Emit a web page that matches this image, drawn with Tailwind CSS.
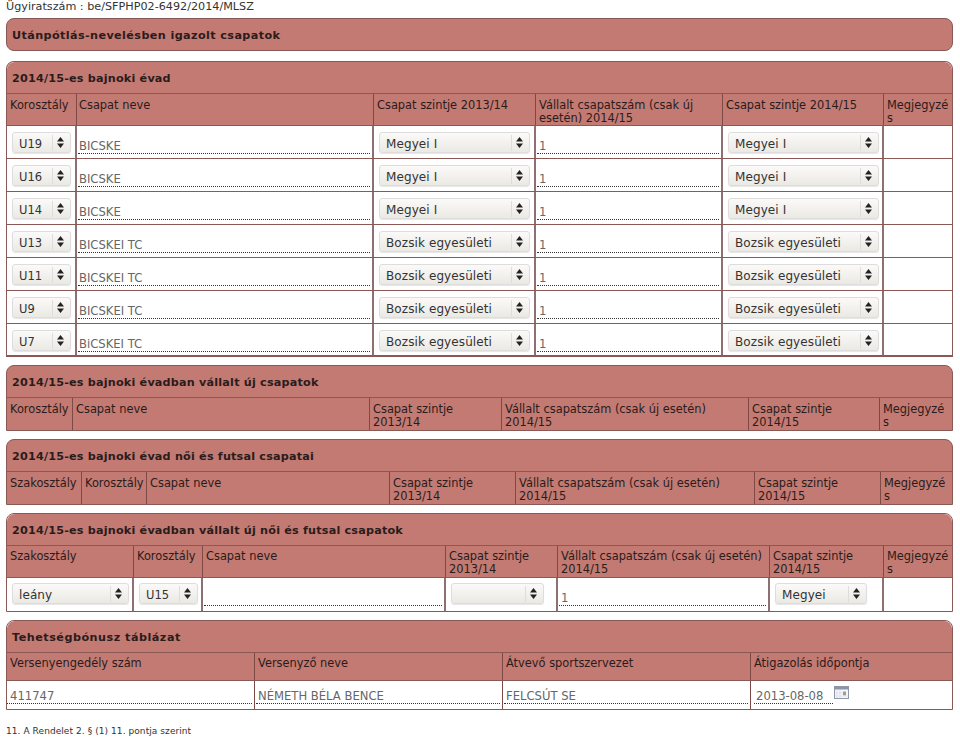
<!DOCTYPE html>
<html lang="hu">
<head>
<meta charset="utf-8">
<script src="https://cdn.jsdelivr.net/npm/@tailwindcss/browser@4"></script>
</head>
<body class="bg-white font-['DejaVu_Sans',sans-serif] text-[11.4px] leading-[13px] text-[#2b1c1c] w-[960px] h-[738px] overflow-hidden">
<div class="pl-[6px] pr-[7px] flex flex-col">
<div class="h-[13px] mb-[5px] text-[11.2px] text-[#333] whitespace-nowrap">Ügyiratszám : be/SFPHP02-6492/2014/MLSZ</div>

<section class="h-[33px] rounded-[8px] border border-[#8a5855] bg-[#c27a72] pl-[5px] pt-[10px] text-[11.2px] font-bold tracking-[0.4px] mb-[10px]">Utánpótlás-nevelésben igazolt csapatok</section>

<section class="rounded-t-[8px] border border-b-2 border-[#8a5855] bg-white mb-[8px]">
  <div class="h-[31px] rounded-t-[8px] bg-[#c27a72] pl-[5px] pt-[10px] text-[11.2px] font-bold tracking-[0.2px]">2014/15-es bajnoki évad</div>
  <div class="grid grid-cols-[70px_297px_162px_187px_161px_1fr] bg-[#c27a72] h-[33px] border-y border-[#8a5855] divide-x divide-[#7d4a48]">
    <div class="pl-[3px] pt-[5px]">Korosztály</div><div class="pl-[2px] pt-[5px]">Csapat neve</div><div class="pl-[3px] pt-[5px] whitespace-nowrap">Csapat szintje 2013/14</div><div class="pl-[3px] pt-[5px]">Vállalt csapatszám (csak új esetén) 2014/15</div><div class="pl-[3px] pt-[5px] whitespace-nowrap">Csapat szintje 2014/15</div><div class="pl-[3px] pt-[5px]">Megjegyzé<br>s</div>
  </div>
  <div class="grid grid-cols-[70px_297px_162px_187px_161px_1fr] h-[33px] border-b border-[#8a5855] divide-x-2 divide-[#8f7072]">
    <div class="pl-[5px] pt-[6px]"><div class="flex w-[59px] h-[21px] rounded-[3px] border border-[#ddd] shadow-[0_1px_1px_rgba(0,0,0,0.1)] bg-gradient-to-b from-[#fbfaf8] to-[#ebe9e4] items-center"><span class="flex-1 pl-[6px] pt-[4px] text-[11.5px] text-[#333]">U19</span><span class="w-[18px] h-[16px] pr-[2px] border-l border-[#ddd] flex justify-center items-center"><svg width="7" height="11" viewBox="0 0 7 11"><path d="M3.5 0 7 4.5H0ZM3.5 11 0 6.5H7Z" fill="#222"/></svg></span></div></div>
    <div class="pl-[1px] pr-[2px] pt-[13px]"><div class="h-[15px] pt-px border-b border-dotted border-[#333] text-[11.6px] text-[#666] pl-[1px]">BICSKE</div></div>
    <div class="pl-[5px] pt-[6px]"><div class="flex w-[151px] h-[21px] rounded-[3px] border border-[#ddd] shadow-[0_1px_1px_rgba(0,0,0,0.1)] bg-gradient-to-b from-[#fbfaf8] to-[#ebe9e4] items-center"><span class="flex-1 pl-[6px] pt-[4px] text-[12px] tracking-[0.1px] text-[#333]">Megyei I</span><span class="w-[18px] h-[16px] pr-[2px] border-l border-[#ddd] flex justify-center items-center"><svg width="7" height="11" viewBox="0 0 7 11"><path d="M3.5 0 7 4.5H0ZM3.5 11 0 6.5H7Z" fill="#222"/></svg></span></div></div>
    <div class="pl-px pr-[2px] pt-[13px]"><div class="h-[15px] pt-px border-b border-dotted border-[#333] text-[11.6px] text-[#666] pl-[2px]">1</div></div>
    <div class="pl-[5px] pt-[6px]"><div class="flex w-[151px] h-[21px] rounded-[3px] border border-[#ddd] shadow-[0_1px_1px_rgba(0,0,0,0.1)] bg-gradient-to-b from-[#fbfaf8] to-[#ebe9e4] items-center"><span class="flex-1 pl-[6px] pt-[4px] text-[12px] tracking-[0.1px] text-[#333]">Megyei I</span><span class="w-[18px] h-[16px] pr-[2px] border-l border-[#ddd] flex justify-center items-center"><svg width="7" height="11" viewBox="0 0 7 11"><path d="M3.5 0 7 4.5H0ZM3.5 11 0 6.5H7Z" fill="#222"/></svg></span></div></div>
    <div></div>
  </div>
  <div class="grid grid-cols-[70px_297px_162px_187px_161px_1fr] h-[33px] border-b border-[#8a5855] divide-x-2 divide-[#8f7072]">
    <div class="pl-[5px] pt-[6px]"><div class="flex w-[59px] h-[21px] rounded-[3px] border border-[#ddd] shadow-[0_1px_1px_rgba(0,0,0,0.1)] bg-gradient-to-b from-[#fbfaf8] to-[#ebe9e4] items-center"><span class="flex-1 pl-[6px] pt-[4px] text-[11.5px] text-[#333]">U16</span><span class="w-[18px] h-[16px] pr-[2px] border-l border-[#ddd] flex justify-center items-center"><svg width="7" height="11" viewBox="0 0 7 11"><path d="M3.5 0 7 4.5H0ZM3.5 11 0 6.5H7Z" fill="#222"/></svg></span></div></div>
    <div class="pl-[1px] pr-[2px] pt-[13px]"><div class="h-[15px] pt-px border-b border-dotted border-[#333] text-[11.6px] text-[#666] pl-[1px]">BICSKE</div></div>
    <div class="pl-[5px] pt-[6px]"><div class="flex w-[151px] h-[21px] rounded-[3px] border border-[#ddd] shadow-[0_1px_1px_rgba(0,0,0,0.1)] bg-gradient-to-b from-[#fbfaf8] to-[#ebe9e4] items-center"><span class="flex-1 pl-[6px] pt-[4px] text-[12px] tracking-[0.1px] text-[#333]">Megyei I</span><span class="w-[18px] h-[16px] pr-[2px] border-l border-[#ddd] flex justify-center items-center"><svg width="7" height="11" viewBox="0 0 7 11"><path d="M3.5 0 7 4.5H0ZM3.5 11 0 6.5H7Z" fill="#222"/></svg></span></div></div>
    <div class="pl-px pr-[2px] pt-[13px]"><div class="h-[15px] pt-px border-b border-dotted border-[#333] text-[11.6px] text-[#666] pl-[2px]">1</div></div>
    <div class="pl-[5px] pt-[6px]"><div class="flex w-[151px] h-[21px] rounded-[3px] border border-[#ddd] shadow-[0_1px_1px_rgba(0,0,0,0.1)] bg-gradient-to-b from-[#fbfaf8] to-[#ebe9e4] items-center"><span class="flex-1 pl-[6px] pt-[4px] text-[12px] tracking-[0.1px] text-[#333]">Megyei I</span><span class="w-[18px] h-[16px] pr-[2px] border-l border-[#ddd] flex justify-center items-center"><svg width="7" height="11" viewBox="0 0 7 11"><path d="M3.5 0 7 4.5H0ZM3.5 11 0 6.5H7Z" fill="#222"/></svg></span></div></div>
    <div></div>
  </div>
  <div class="grid grid-cols-[70px_297px_162px_187px_161px_1fr] h-[33px] border-b border-[#8a5855] divide-x-2 divide-[#8f7072]">
    <div class="pl-[5px] pt-[6px]"><div class="flex w-[59px] h-[21px] rounded-[3px] border border-[#ddd] shadow-[0_1px_1px_rgba(0,0,0,0.1)] bg-gradient-to-b from-[#fbfaf8] to-[#ebe9e4] items-center"><span class="flex-1 pl-[6px] pt-[4px] text-[11.5px] text-[#333]">U14</span><span class="w-[18px] h-[16px] pr-[2px] border-l border-[#ddd] flex justify-center items-center"><svg width="7" height="11" viewBox="0 0 7 11"><path d="M3.5 0 7 4.5H0ZM3.5 11 0 6.5H7Z" fill="#222"/></svg></span></div></div>
    <div class="pl-[1px] pr-[2px] pt-[13px]"><div class="h-[15px] pt-px border-b border-dotted border-[#333] text-[11.6px] text-[#666] pl-[1px]">BICSKE</div></div>
    <div class="pl-[5px] pt-[6px]"><div class="flex w-[151px] h-[21px] rounded-[3px] border border-[#ddd] shadow-[0_1px_1px_rgba(0,0,0,0.1)] bg-gradient-to-b from-[#fbfaf8] to-[#ebe9e4] items-center"><span class="flex-1 pl-[6px] pt-[4px] text-[12px] tracking-[0.1px] text-[#333]">Megyei I</span><span class="w-[18px] h-[16px] pr-[2px] border-l border-[#ddd] flex justify-center items-center"><svg width="7" height="11" viewBox="0 0 7 11"><path d="M3.5 0 7 4.5H0ZM3.5 11 0 6.5H7Z" fill="#222"/></svg></span></div></div>
    <div class="pl-px pr-[2px] pt-[13px]"><div class="h-[15px] pt-px border-b border-dotted border-[#333] text-[11.6px] text-[#666] pl-[2px]">1</div></div>
    <div class="pl-[5px] pt-[6px]"><div class="flex w-[151px] h-[21px] rounded-[3px] border border-[#ddd] shadow-[0_1px_1px_rgba(0,0,0,0.1)] bg-gradient-to-b from-[#fbfaf8] to-[#ebe9e4] items-center"><span class="flex-1 pl-[6px] pt-[4px] text-[12px] tracking-[0.1px] text-[#333]">Megyei I</span><span class="w-[18px] h-[16px] pr-[2px] border-l border-[#ddd] flex justify-center items-center"><svg width="7" height="11" viewBox="0 0 7 11"><path d="M3.5 0 7 4.5H0ZM3.5 11 0 6.5H7Z" fill="#222"/></svg></span></div></div>
    <div></div>
  </div>
  <div class="grid grid-cols-[70px_297px_162px_187px_161px_1fr] h-[33px] border-b border-[#8a5855] divide-x-2 divide-[#8f7072]">
    <div class="pl-[5px] pt-[6px]"><div class="flex w-[59px] h-[21px] rounded-[3px] border border-[#ddd] shadow-[0_1px_1px_rgba(0,0,0,0.1)] bg-gradient-to-b from-[#fbfaf8] to-[#ebe9e4] items-center"><span class="flex-1 pl-[6px] pt-[4px] text-[11.5px] text-[#333]">U13</span><span class="w-[18px] h-[16px] pr-[2px] border-l border-[#ddd] flex justify-center items-center"><svg width="7" height="11" viewBox="0 0 7 11"><path d="M3.5 0 7 4.5H0ZM3.5 11 0 6.5H7Z" fill="#222"/></svg></span></div></div>
    <div class="pl-[1px] pr-[2px] pt-[13px]"><div class="h-[15px] pt-px border-b border-dotted border-[#333] text-[11.6px] text-[#666] pl-[1px]">BICSKEI TC</div></div>
    <div class="pl-[5px] pt-[6px]"><div class="flex w-[151px] h-[21px] rounded-[3px] border border-[#ddd] shadow-[0_1px_1px_rgba(0,0,0,0.1)] bg-gradient-to-b from-[#fbfaf8] to-[#ebe9e4] items-center"><span class="flex-1 pl-[6px] pt-[4px] text-[12px] tracking-[0.1px] text-[#333]">Bozsik egyesületi</span><span class="w-[18px] h-[16px] pr-[2px] border-l border-[#ddd] flex justify-center items-center"><svg width="7" height="11" viewBox="0 0 7 11"><path d="M3.5 0 7 4.5H0ZM3.5 11 0 6.5H7Z" fill="#222"/></svg></span></div></div>
    <div class="pl-px pr-[2px] pt-[13px]"><div class="h-[15px] pt-px border-b border-dotted border-[#333] text-[11.6px] text-[#666] pl-[2px]">1</div></div>
    <div class="pl-[5px] pt-[6px]"><div class="flex w-[151px] h-[21px] rounded-[3px] border border-[#ddd] shadow-[0_1px_1px_rgba(0,0,0,0.1)] bg-gradient-to-b from-[#fbfaf8] to-[#ebe9e4] items-center"><span class="flex-1 pl-[6px] pt-[4px] text-[12px] tracking-[0.1px] text-[#333]">Bozsik egyesületi</span><span class="w-[18px] h-[16px] pr-[2px] border-l border-[#ddd] flex justify-center items-center"><svg width="7" height="11" viewBox="0 0 7 11"><path d="M3.5 0 7 4.5H0ZM3.5 11 0 6.5H7Z" fill="#222"/></svg></span></div></div>
    <div></div>
  </div>
  <div class="grid grid-cols-[70px_297px_162px_187px_161px_1fr] h-[33px] border-b border-[#8a5855] divide-x-2 divide-[#8f7072]">
    <div class="pl-[5px] pt-[6px]"><div class="flex w-[59px] h-[21px] rounded-[3px] border border-[#ddd] shadow-[0_1px_1px_rgba(0,0,0,0.1)] bg-gradient-to-b from-[#fbfaf8] to-[#ebe9e4] items-center"><span class="flex-1 pl-[6px] pt-[4px] text-[11.5px] text-[#333]">U11</span><span class="w-[18px] h-[16px] pr-[2px] border-l border-[#ddd] flex justify-center items-center"><svg width="7" height="11" viewBox="0 0 7 11"><path d="M3.5 0 7 4.5H0ZM3.5 11 0 6.5H7Z" fill="#222"/></svg></span></div></div>
    <div class="pl-[1px] pr-[2px] pt-[13px]"><div class="h-[15px] pt-px border-b border-dotted border-[#333] text-[11.6px] text-[#666] pl-[1px]">BICSKEI TC</div></div>
    <div class="pl-[5px] pt-[6px]"><div class="flex w-[151px] h-[21px] rounded-[3px] border border-[#ddd] shadow-[0_1px_1px_rgba(0,0,0,0.1)] bg-gradient-to-b from-[#fbfaf8] to-[#ebe9e4] items-center"><span class="flex-1 pl-[6px] pt-[4px] text-[12px] tracking-[0.1px] text-[#333]">Bozsik egyesületi</span><span class="w-[18px] h-[16px] pr-[2px] border-l border-[#ddd] flex justify-center items-center"><svg width="7" height="11" viewBox="0 0 7 11"><path d="M3.5 0 7 4.5H0ZM3.5 11 0 6.5H7Z" fill="#222"/></svg></span></div></div>
    <div class="pl-px pr-[2px] pt-[13px]"><div class="h-[15px] pt-px border-b border-dotted border-[#333] text-[11.6px] text-[#666] pl-[2px]">1</div></div>
    <div class="pl-[5px] pt-[6px]"><div class="flex w-[151px] h-[21px] rounded-[3px] border border-[#ddd] shadow-[0_1px_1px_rgba(0,0,0,0.1)] bg-gradient-to-b from-[#fbfaf8] to-[#ebe9e4] items-center"><span class="flex-1 pl-[6px] pt-[4px] text-[12px] tracking-[0.1px] text-[#333]">Bozsik egyesületi</span><span class="w-[18px] h-[16px] pr-[2px] border-l border-[#ddd] flex justify-center items-center"><svg width="7" height="11" viewBox="0 0 7 11"><path d="M3.5 0 7 4.5H0ZM3.5 11 0 6.5H7Z" fill="#222"/></svg></span></div></div>
    <div></div>
  </div>
  <div class="grid grid-cols-[70px_297px_162px_187px_161px_1fr] h-[33px] border-b border-[#8a5855] divide-x-2 divide-[#8f7072]">
    <div class="pl-[5px] pt-[6px]"><div class="flex w-[59px] h-[21px] rounded-[3px] border border-[#ddd] shadow-[0_1px_1px_rgba(0,0,0,0.1)] bg-gradient-to-b from-[#fbfaf8] to-[#ebe9e4] items-center"><span class="flex-1 pl-[6px] pt-[4px] text-[11.5px] text-[#333]">U9</span><span class="w-[18px] h-[16px] pr-[2px] border-l border-[#ddd] flex justify-center items-center"><svg width="7" height="11" viewBox="0 0 7 11"><path d="M3.5 0 7 4.5H0ZM3.5 11 0 6.5H7Z" fill="#222"/></svg></span></div></div>
    <div class="pl-[1px] pr-[2px] pt-[13px]"><div class="h-[15px] pt-px border-b border-dotted border-[#333] text-[11.6px] text-[#666] pl-[1px]">BICSKEI TC</div></div>
    <div class="pl-[5px] pt-[6px]"><div class="flex w-[151px] h-[21px] rounded-[3px] border border-[#ddd] shadow-[0_1px_1px_rgba(0,0,0,0.1)] bg-gradient-to-b from-[#fbfaf8] to-[#ebe9e4] items-center"><span class="flex-1 pl-[6px] pt-[4px] text-[12px] tracking-[0.1px] text-[#333]">Bozsik egyesületi</span><span class="w-[18px] h-[16px] pr-[2px] border-l border-[#ddd] flex justify-center items-center"><svg width="7" height="11" viewBox="0 0 7 11"><path d="M3.5 0 7 4.5H0ZM3.5 11 0 6.5H7Z" fill="#222"/></svg></span></div></div>
    <div class="pl-px pr-[2px] pt-[13px]"><div class="h-[15px] pt-px border-b border-dotted border-[#333] text-[11.6px] text-[#666] pl-[2px]">1</div></div>
    <div class="pl-[5px] pt-[6px]"><div class="flex w-[151px] h-[21px] rounded-[3px] border border-[#ddd] shadow-[0_1px_1px_rgba(0,0,0,0.1)] bg-gradient-to-b from-[#fbfaf8] to-[#ebe9e4] items-center"><span class="flex-1 pl-[6px] pt-[4px] text-[12px] tracking-[0.1px] text-[#333]">Bozsik egyesületi</span><span class="w-[18px] h-[16px] pr-[2px] border-l border-[#ddd] flex justify-center items-center"><svg width="7" height="11" viewBox="0 0 7 11"><path d="M3.5 0 7 4.5H0ZM3.5 11 0 6.5H7Z" fill="#222"/></svg></span></div></div>
    <div></div>
  </div>
  <div class="grid grid-cols-[70px_297px_162px_187px_161px_1fr] h-[31px] divide-x-2 divide-[#8f7072]">
    <div class="pl-[5px] pt-[6px]"><div class="flex w-[59px] h-[21px] rounded-[3px] border border-[#ddd] shadow-[0_1px_1px_rgba(0,0,0,0.1)] bg-gradient-to-b from-[#fbfaf8] to-[#ebe9e4] items-center"><span class="flex-1 pl-[6px] pt-[4px] text-[11.5px] text-[#333]">U7</span><span class="w-[18px] h-[16px] pr-[2px] border-l border-[#ddd] flex justify-center items-center"><svg width="7" height="11" viewBox="0 0 7 11"><path d="M3.5 0 7 4.5H0ZM3.5 11 0 6.5H7Z" fill="#222"/></svg></span></div></div>
    <div class="pl-[1px] pr-[2px] pt-[13px]"><div class="h-[15px] pt-px border-b border-dotted border-[#333] text-[11.6px] text-[#666] pl-[1px]">BiCSKEI TC</div></div>
    <div class="pl-[5px] pt-[6px]"><div class="flex w-[151px] h-[21px] rounded-[3px] border border-[#ddd] shadow-[0_1px_1px_rgba(0,0,0,0.1)] bg-gradient-to-b from-[#fbfaf8] to-[#ebe9e4] items-center"><span class="flex-1 pl-[6px] pt-[4px] text-[12px] tracking-[0.1px] text-[#333]">Bozsik egyesületi</span><span class="w-[18px] h-[16px] pr-[2px] border-l border-[#ddd] flex justify-center items-center"><svg width="7" height="11" viewBox="0 0 7 11"><path d="M3.5 0 7 4.5H0ZM3.5 11 0 6.5H7Z" fill="#222"/></svg></span></div></div>
    <div class="pl-px pr-[2px] pt-[13px]"><div class="h-[15px] pt-px border-b border-dotted border-[#333] text-[11.6px] text-[#666] pl-[2px]">1</div></div>
    <div class="pl-[5px] pt-[6px]"><div class="flex w-[151px] h-[21px] rounded-[3px] border border-[#ddd] shadow-[0_1px_1px_rgba(0,0,0,0.1)] bg-gradient-to-b from-[#fbfaf8] to-[#ebe9e4] items-center"><span class="flex-1 pl-[6px] pt-[4px] text-[12px] tracking-[0.1px] text-[#333]">Bozsik egyesületi</span><span class="w-[18px] h-[16px] pr-[2px] border-l border-[#ddd] flex justify-center items-center"><svg width="7" height="11" viewBox="0 0 7 11"><path d="M3.5 0 7 4.5H0ZM3.5 11 0 6.5H7Z" fill="#222"/></svg></span></div></div>
    <div></div>
  </div>
</section>

<section class="rounded-t-[8px] border border-[#8a5855] bg-[#c27a72] mb-[8px] h-[66px]">
  <div class="h-[31px] pl-[5px] pt-[10px] text-[11.2px] font-bold tracking-[0.2px]">2014/15-es bajnoki évadban vállalt új csapatok</div>
  <div class="grid grid-cols-[66px_297px_132px_247px_131px_1fr] h-[33px] border-t border-[#8a5855] divide-x divide-[#7d4a48]">
    <div class="pl-[3px] pt-[5px]">Korosztály</div><div class="pl-[3px] pt-[5px]">Csapat neve</div><div class="pl-[3px] pt-[5px]">Csapat szintje 2013/14</div><div class="pl-[3px] pt-[5px]">Vállalt csapatszám (csak új esetén) 2014/15</div><div class="pl-[3px] pt-[5px]">Csapat szintje 2014/15</div><div class="pl-[3px] pt-[5px]">Megjegyzé<br>s</div>
  </div>
</section>

<section class="rounded-t-[8px] border border-[#8a5855] bg-[#c27a72] mb-[8px] h-[66px]">
  <div class="h-[31px] pl-[5px] pt-[10px] text-[11.2px] font-bold tracking-[0.2px]">2014/15-es bajnoki évad női és futsal csapatai</div>
  <div class="grid grid-cols-[75px_65px_243px_126px_239px_126px_1fr] h-[33px] border-t border-[#8a5855] divide-x divide-[#7d4a48]">
    <div class="pl-[3px] pt-[5px]">Szakosztály</div><div class="pl-[3px] pt-[5px]">Korosztály</div><div class="pl-[3px] pt-[5px]">Csapat neve</div><div class="pl-[3px] pt-[5px]">Csapat szintje 2013/14</div><div class="pl-[3px] pt-[5px]">Vállalt csapatszám (csak új esetén) 2014/15</div><div class="pl-[3px] pt-[5px]">Csapat szintje 2014/15</div><div class="pl-[3px] pt-[5px]">Megjegyzé<br>s</div>
  </div>
</section>

<section class="rounded-t-[8px] border border-[#8a5855] bg-white mb-[8px] h-[99px]">
  <div class="h-[31px] rounded-t-[8px] bg-[#c27a72] pl-[5px] pt-[10px] text-[11.2px] font-bold tracking-[0.2px]">2014/15-es bajnoki évadban vállalt új női és futsal csapatok</div>
  <div class="grid grid-cols-[127px_69px_243px_112px_212px_114px_1fr] h-[33px] bg-[#c27a72] border-y border-[#8a5855] divide-x divide-[#7d4a48]">
    <div class="pl-[3px] pt-[4px]">Szakosztály</div><div class="pl-[3px] pt-[4px]">Korosztály</div><div class="pl-[3px] pt-[4px]">Csapat neve</div><div class="pl-[3px] pt-[4px]">Csapat szintje 2013/14</div><div class="pl-[3px] pt-[4px]">Vállalt csapatszám (csak új esetén) 2014/15</div><div class="pl-[3px] pt-[4px]">Csapat szintje 2014/15</div><div class="pl-[3px] pt-[4px]">Megjegyzé<br>s</div>
  </div>
  <div class="grid grid-cols-[127px_69px_243px_112px_212px_114px_1fr] h-[33px] divide-x-2 divide-[#8f7072]">
    <div class="pl-[5px] pt-[5px]"><div class="flex w-[117px] h-[21px] rounded-[3px] border border-[#ddd] shadow-[0_1px_1px_rgba(0,0,0,0.1)] bg-gradient-to-b from-[#fbfaf8] to-[#ebe9e4] items-center"><span class="flex-1 pl-[6px] pt-[4px] text-[12px] tracking-[0.1px] text-[#333]">leány</span><span class="w-[18px] h-[16px] pr-[2px] border-l border-[#ddd] flex justify-center items-center"><svg width="7" height="11" viewBox="0 0 7 11"><path d="M3.5 0 7 4.5H0ZM3.5 11 0 6.5H7Z" fill="#222"/></svg></span></div></div>
    <div class="pl-[5px] pt-[5px]"><div class="flex w-[59px] h-[21px] rounded-[3px] border border-[#ddd] shadow-[0_1px_1px_rgba(0,0,0,0.1)] bg-gradient-to-b from-[#fbfaf8] to-[#ebe9e4] items-center"><span class="flex-1 pl-[6px] pt-[4px] text-[11.5px] text-[#333]">U15</span><span class="w-[18px] h-[16px] pr-[2px] border-l border-[#ddd] flex justify-center items-center"><svg width="7" height="11" viewBox="0 0 7 11"><path d="M3.5 0 7 4.5H0ZM3.5 11 0 6.5H7Z" fill="#222"/></svg></span></div></div>
    <div class="pl-px pr-[2px] pt-[13px]"><div class="h-[15px] border-b border-dotted border-[#333]"></div></div>
    <div class="pl-[5px] pt-[5px]"><div class="flex w-[93px] h-[21px] rounded-[3px] border border-[#ddd] shadow-[0_1px_1px_rgba(0,0,0,0.1)] bg-gradient-to-b from-[#fbfaf8] to-[#ebe9e4] items-center"><span class="flex-1"></span><span class="w-[18px] h-[16px] pr-[2px] border-l border-[#ddd] flex justify-center items-center"><svg width="7" height="11" viewBox="0 0 7 11"><path d="M3.5 0 7 4.5H0ZM3.5 11 0 6.5H7Z" fill="#222"/></svg></span></div></div>
    <div class="pl-px pr-[2px] pt-[13px]"><div class="h-[15px] pt-px border-b border-dotted border-[#333] text-[11.6px] text-[#666] pl-[2px]">1</div></div>
    <div class="pl-[5px] pt-[5px]"><div class="flex w-[92px] h-[21px] rounded-[3px] border border-[#ddd] shadow-[0_1px_1px_rgba(0,0,0,0.1)] bg-gradient-to-b from-[#fbfaf8] to-[#ebe9e4] items-center"><span class="flex-1 pl-[6px] pt-[4px] text-[12px] tracking-[0.1px] text-[#333]">Megyei</span><span class="w-[18px] h-[16px] pr-[2px] border-l border-[#ddd] flex justify-center items-center"><svg width="7" height="11" viewBox="0 0 7 11"><path d="M3.5 0 7 4.5H0ZM3.5 11 0 6.5H7Z" fill="#222"/></svg></span></div></div>
    <div></div>
  </div>
</section>

<section class="rounded-t-[8px] border border-[#8a5855] bg-white h-[90px]">
  <div class="h-[31px] rounded-t-[8px] bg-[#c27a72] pl-[5px] pt-[10px] text-[11.2px] font-bold tracking-[0.5px]">Tehetségbónusz táblázat</div>
  <div class="grid grid-cols-[248px_248px_248px_1fr] h-[29px] bg-[#c27a72] border-y border-[#8a5855] divide-x divide-[#7d4a48]">
    <div class="pl-[3px] pt-[4px]">Versenyengedély szám</div><div class="pl-[3px] pt-[4px]">Versenyző neve</div><div class="pl-[3px] pt-[4px]">Átvevő sportszervezet</div><div class="pl-[3px] pt-[4px]">Átigazolás időpontja</div>
  </div>
  <div class="grid grid-cols-[248px_248px_248px_1fr] h-[28px] divide-x divide-[#7d4a48]">
    <div class="pr-[2px] pt-[8px]"><div class="h-[15px] pt-px border-b border-dotted border-[#333] text-[11.6px] text-[#666] pl-[3px]">411747</div></div>
    <div class="pl-px pr-[2px] pt-[8px]"><div class="h-[15px] pt-px border-b border-dotted border-[#333] text-[11.6px] text-[#666] pl-[2px]">NÉMETH BÉLA BENCE</div></div>
    <div class="pl-px pr-[2px] pt-[8px]"><div class="h-[15px] pt-px border-b border-dotted border-[#333] text-[11.6px] text-[#666] pl-[2px]">FELCSÚT SE</div></div>
    <div class="pl-[3px] pt-[8px] flex items-start"><div class="w-[79px] h-[15px] pt-px border-b border-dotted border-[#333] text-[11.6px] text-[#666] pl-[2px] whitespace-nowrap">2013-08-08</div><svg class="ml-[1px] -mt-[3px]" width="15" height="13" viewBox="0 0 15 13"><rect x="0.5" y="0.5" width="14" height="12" fill="#f5f6f9" stroke="#8f97a8"/><rect x="1" y="1" width="13" height="2.5" fill="#8d94a8"/><rect x="9" y="5.5" width="3" height="4" fill="#a89c84"/><path d="M3 4v8M6 4v8M1 7h8M1 10h13" stroke="#dde2ea"/></svg></div>
  </div>
</section>

<div class="mt-[16px] text-[9px] leading-[10px] tracking-[0.07px] text-[#333] whitespace-nowrap">11. A Rendelet 2. § (1) 11. pontja szerint</div>
</div>
</body>
</html>
